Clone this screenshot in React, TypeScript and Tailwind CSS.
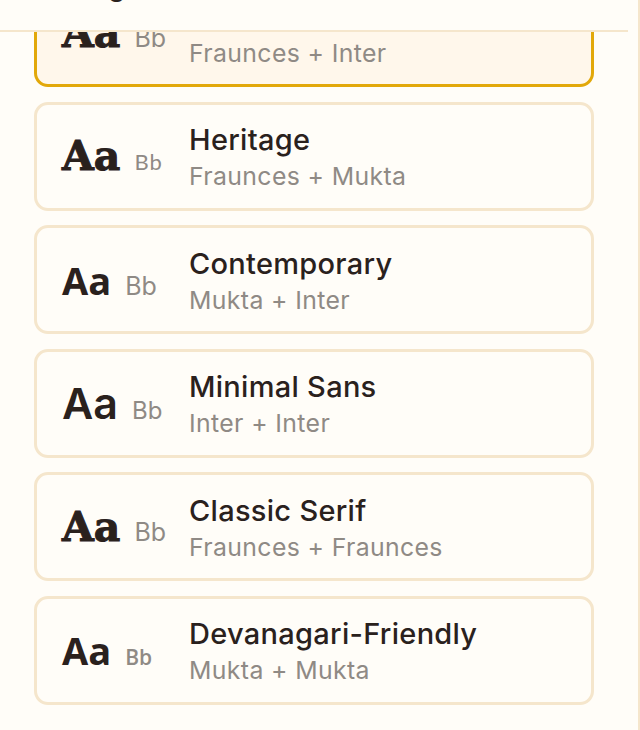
import React from "react";

type Pair = {
  title: string;
  sub: string;
  aa: string;
  bb: string;
  selected?: boolean;
};

const SERIF_AA =
  "font-['DejaVu_Serif',serif] font-bold text-[41px] leading-[normal] [-webkit-text-stroke:1px_#2a211d]";
const MUKTA_AA = "font-['Open_Sans',sans-serif] font-bold text-[38px] leading-[normal]";
const INTER_AA = "font-['Inter',sans-serif] font-semibold text-[43px] leading-[normal]";
const INTER_BB = "font-['Inter',sans-serif] font-normal text-[25px] leading-[normal]";
const INTER_BB_SM = "font-['Inter',sans-serif] font-normal text-[24px] leading-[normal]";
const MUKTA_BB = "font-['Lato',sans-serif] font-normal text-[22px] tracking-[0.05em] leading-[normal]";
const MUKTA_BB_BOLD = "font-['Open_Sans',sans-serif] font-semibold text-[21px] leading-[normal]";

const pairs: Pair[] = [
  { title: "Editorial", sub: "Fraunces + Inter", aa: SERIF_AA, bb: INTER_BB, selected: true },
  { title: "Heritage", sub: "Fraunces + Mukta", aa: SERIF_AA, bb: MUKTA_BB },
  { title: "Contemporary", sub: "Mukta + Inter", aa: MUKTA_AA, bb: INTER_BB },
  { title: "Minimal Sans", sub: "Inter + Inter", aa: INTER_AA, bb: INTER_BB_SM },
  { title: "Classic Serif", sub: "Fraunces + Fraunces", aa: SERIF_AA, bb: INTER_BB },
  { title: "Devanagari-Friendly", sub: "Mukta + Mukta", aa: MUKTA_AA, bb: MUKTA_BB_BOLD },
];

function Card({ p }: { p: Pair }) {
  return (
    <div
      className={
        p.selected
          ? "h-[109px] shrink-0 rounded-[14px] border-[3px] border-[#e2a80a] bg-[#fff7eb] flex items-center pl-[25px]"
          : "h-[109px] shrink-0 rounded-[14px] border-[3px] border-[#f5e6cc] bg-[#fffdf8] flex items-center pl-[25px]"
      }
    >
      <div className="w-[113px] shrink-0 flex items-baseline gap-[14px]">
        <span className={`${p.aa} text-[#2a211d]`}>Aa</span>
        <span className={`${p.bb} text-[#8f8a85]`}>Bb</span>
      </div>
      <div className="ml-[14px] pt-[4px] flex flex-col font-['Inter',sans-serif]">
        <span className="text-[29px] font-medium tracking-[0.01em] leading-[36px] text-[#2a211d]">{p.title}</span>
        <span className="text-[24.8px] tracking-[0.015em] leading-[36px] text-[#8f8a85]">{p.sub}</span>
      </div>
    </div>
  );
}

export default function App() {
  return (
    <div className="relative w-[640px] h-[730px] overflow-hidden bg-[#fffdf8] border-r-2 border-[#f5e6cc]">
      <div className="absolute top-0 left-0 z-10 w-[628px] h-[32px] overflow-hidden bg-[#fffdf8] border-b-2 border-[#f5e6cc] pl-[51px]">
        <h2 className="-mt-[31px] font-['Inter',sans-serif] text-[27px] font-semibold leading-[36px] text-[#2a211d]">
          Design
        </h2>
      </div>
      <div className="-mt-[22px] ml-[34px] w-[560px] flex flex-col gap-[14.5px]">
        {pairs.map((p) => (
          <Card key={p.title} p={p} />
        ))}
      </div>
    </div>
  );
}
